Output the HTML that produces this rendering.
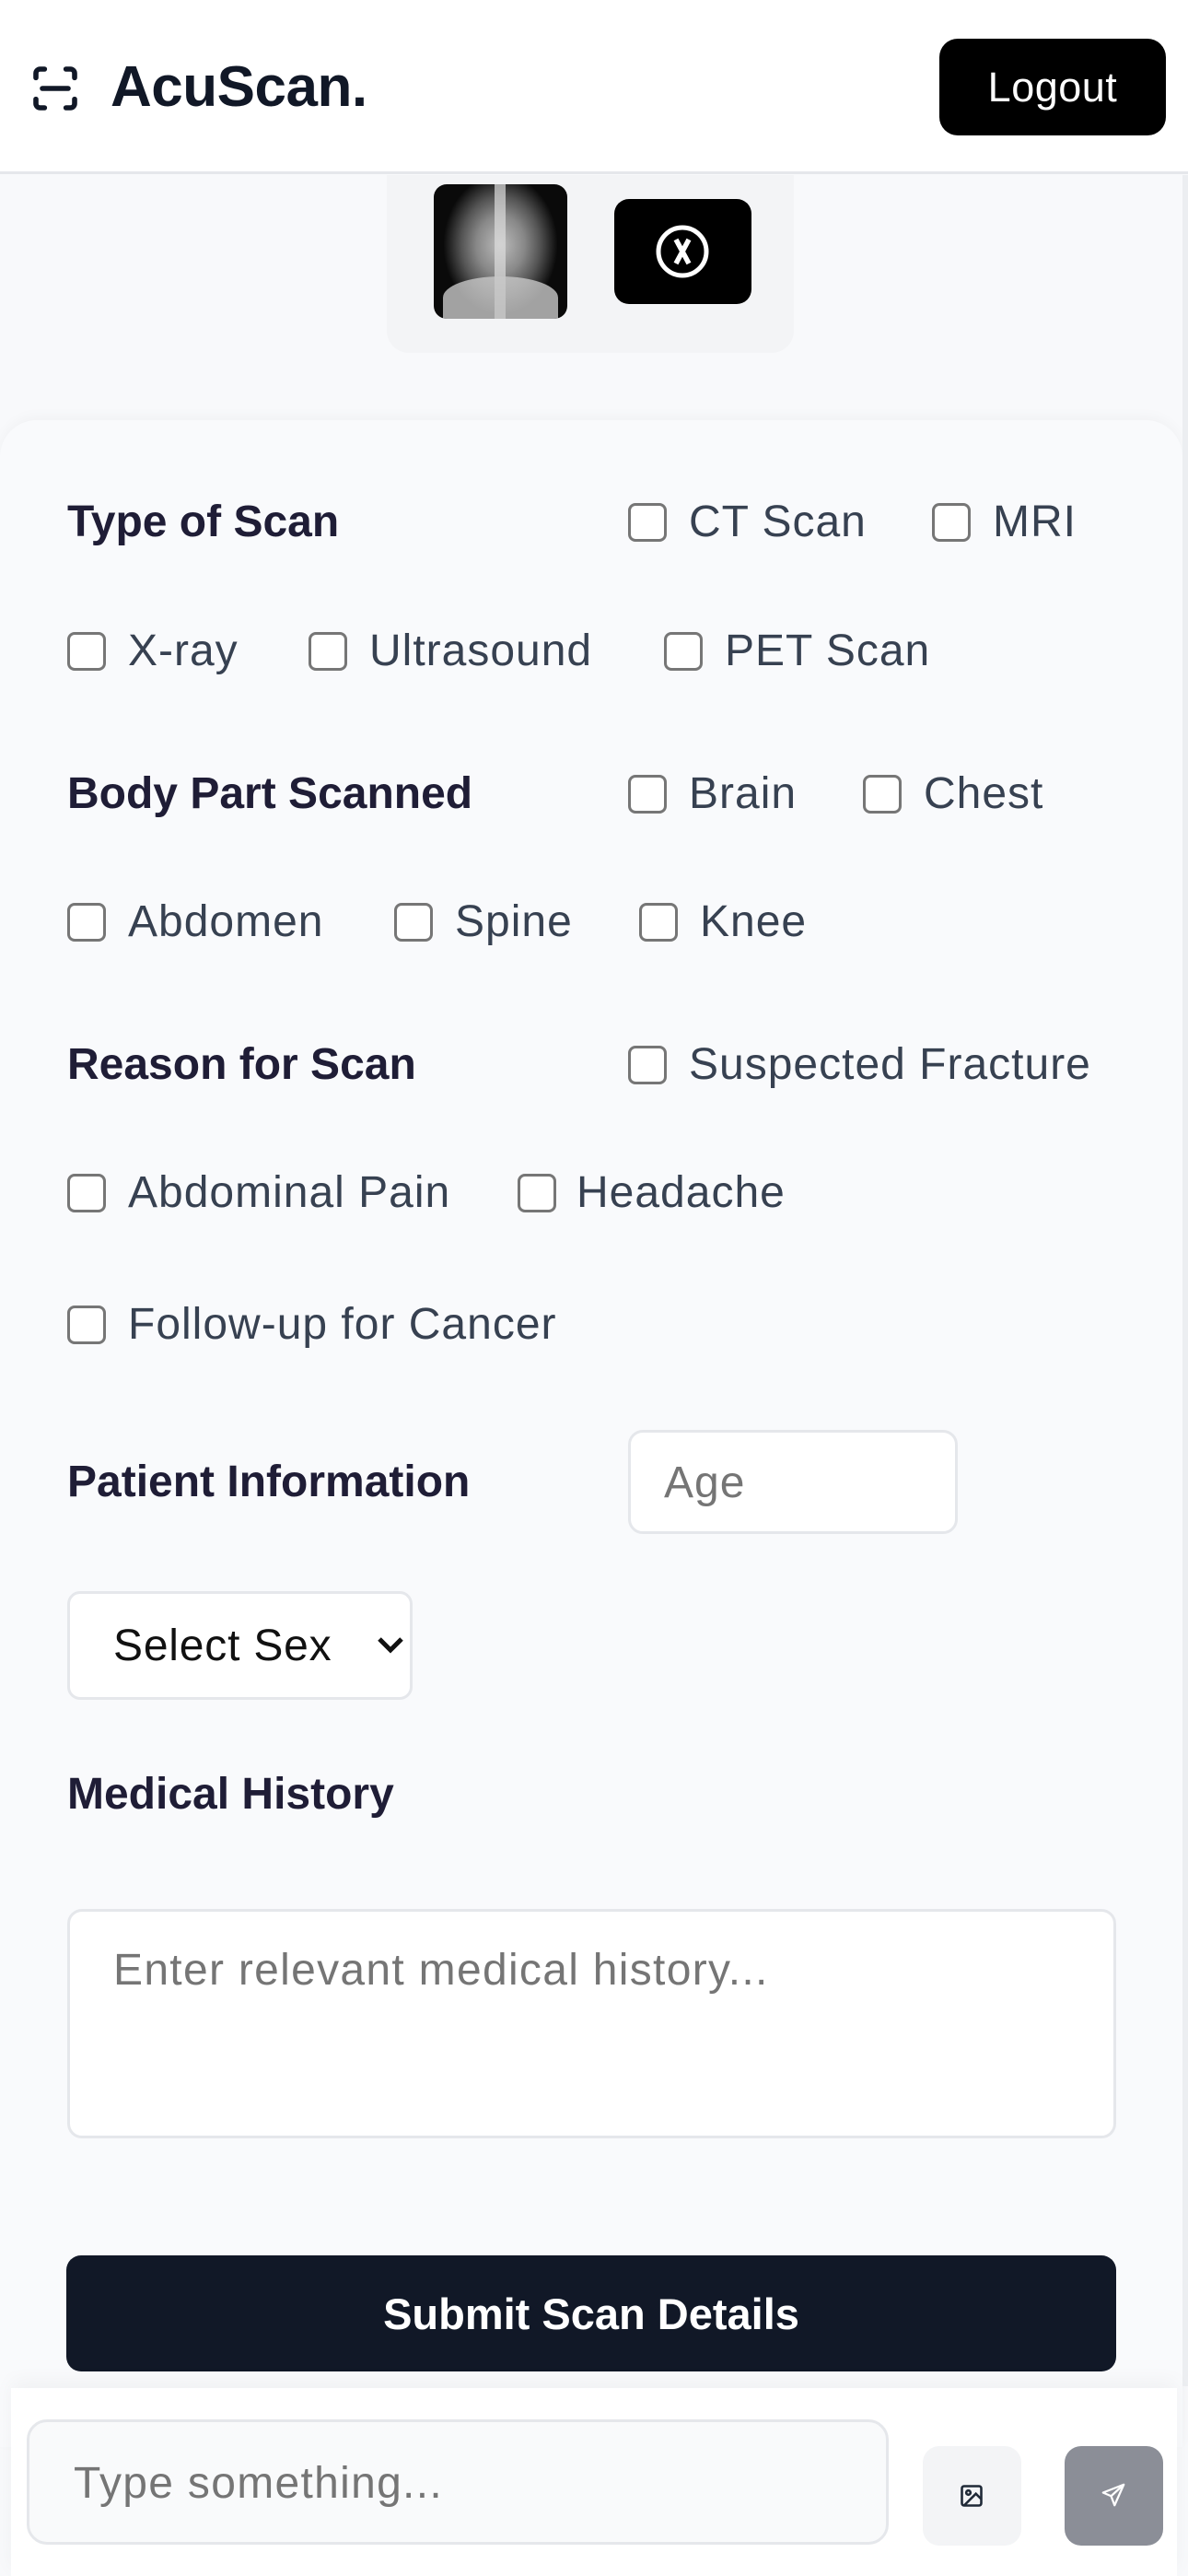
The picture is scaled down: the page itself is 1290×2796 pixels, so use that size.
<!DOCTYPE html>
<html><head><meta charset="utf-8">
<style>
*{box-sizing:border-box;margin:0;padding:0}
html,body{width:1290px;height:2796px;overflow:hidden;background:#f8f9fb;font-family:"Liberation Sans",sans-serif;position:relative}
.a{position:absolute;white-space:nowrap;line-height:1}
.h{font-size:48px;font-weight:bold;color:#1f1d36}
.l{font-size:48px;color:#374151;letter-spacing:1px}
.cb{position:absolute;width:42px;height:42px;border:3px solid #767676;border-radius:8px;background:#fff}
</style></head><body>
<!-- header -->
<div class="a" style="left:0;top:0;width:1290px;height:189px;background:#fff;border-bottom:3px solid #e5e7eb"></div>
<svg class="a" style="left:32px;top:68px" width="56" height="56" viewBox="0 0 24 24" fill="none" stroke="#111827" stroke-width="2.4" stroke-linecap="round">
<path d="M3 7V5a2 2 0 0 1 2-2h2M17 3h2a2 2 0 0 1 2 2v2M21 17v2a2 2 0 0 1-2 2h-2M7 21H5a2 2 0 0 1-2-2v-2M6 12h12"/></svg>
<div class="a" style="left:120px;top:64px;font-size:62px;font-weight:bold;color:#111827;letter-spacing:-0.5px">AcuScan.</div>
<div class="a" style="left:1020px;top:42px;width:246px;height:105px;background:#000;border-radius:20px;color:#fff;font-size:45px;letter-spacing:.5px;display:flex;align-items:center;justify-content:center">Logout</div>
<!-- image card -->
<div class="a" style="left:420px;top:190px;width:442px;height:193px;background:#f3f4f6;border-radius:0 0 24px 24px"></div>
<div class="a" style="left:471px;top:200px;width:145px;height:146px;border-radius:14px;background:radial-gradient(ellipse 45% 55% at 50% 45%,#bbb 0%,#888 40%,#555 65%,#0a0a0a 95%);overflow:hidden">
<div style="position:absolute;left:66px;top:0;width:12px;height:146px;background:#ddd;opacity:.7"></div>
<div style="position:absolute;left:10px;top:100px;width:125px;height:46px;background:#c8c8c8;border-radius:50% 50% 0 0;opacity:.8"></div>
</div>
<div class="a" style="left:667px;top:216px;width:149px;height:114px;background:#000;border-radius:16px"></div>
<svg class="a" style="left:711px;top:243px" width="60" height="60" viewBox="0 0 60 60" fill="none" stroke="#fff" stroke-width="5"><circle cx="30" cy="30" r="26"/><path d="M23 17l14 26M37 17L23 43" stroke-width="5.5"/></svg>
<!-- card -->
<div class="a" style="left:0;top:456px;width:1284px;height:2200px;background:#f9fafc;border-radius:40px 40px 0 0;box-shadow:0 -4px 14px rgba(0,0,0,.03)"></div>
<div class="a" style="left:1284px;top:190px;width:6px;height:2400px;background:#eceef1"></div>

<div class="a h" style="left:73px;top:543px">Type of Scan</div>
<div class="cb" style="left:682px;top:546px"></div><div class="a l" style="left:748px;top:543px">CT Scan</div>
<div class="cb" style="left:1012px;top:546px"></div><div class="a l" style="left:1078px;top:543px">MRI</div>
<div class="cb" style="left:73px;top:686px"></div><div class="a l" style="left:139px;top:683px">X-ray</div>
<div class="cb" style="left:335px;top:686px"></div><div class="a l" style="left:401px;top:683px">Ultrasound</div>
<div class="cb" style="left:721px;top:686px"></div><div class="a l" style="left:787px;top:683px">PET Scan</div>

<div class="a h" style="left:73px;top:838px">Body Part Scanned</div>
<div class="cb" style="left:682px;top:841px"></div><div class="a l" style="left:748px;top:838px">Brain</div>
<div class="cb" style="left:937px;top:841px"></div><div class="a l" style="left:1003px;top:838px">Chest</div>
<div class="cb" style="left:73px;top:980px"></div><div class="a l" style="left:139px;top:977px">Abdomen</div>
<div class="cb" style="left:428px;top:980px"></div><div class="a l" style="left:494px;top:977px">Spine</div>
<div class="cb" style="left:694px;top:980px"></div><div class="a l" style="left:760px;top:977px">Knee</div>

<div class="a h" style="left:73px;top:1132px">Reason for Scan</div>
<div class="cb" style="left:682px;top:1135px"></div><div class="a l" style="left:748px;top:1132px">Suspected Fracture</div>
<div class="cb" style="left:73px;top:1274px"></div><div class="a l" style="left:139px;top:1271px">Abdominal Pain</div>
<div class="cb" style="left:562px;top:1274px"></div><div class="a l" style="left:626px;top:1271px">Headache</div>
<div class="cb" style="left:73px;top:1417px"></div><div class="a l" style="left:139px;top:1414px">Follow-up for Cancer</div>

<div class="a h" style="left:73px;top:1585px">Patient Information</div>
<div class="a" style="left:682px;top:1552px;width:358px;height:113px;background:#fff;border:3px solid #e5e7eb;border-radius:16px"></div>
<div class="a" style="left:721px;top:1586px;font-size:48px;letter-spacing:1px;color:#757575">Age</div>
<div class="a" style="left:73px;top:1727px;width:375px;height:118px;background:#fff;border:3px solid #e5e7eb;border-radius:14px"></div>
<div class="a" style="left:123px;top:1763px;font-size:48px;letter-spacing:.8px;color:#111">Select Sex</div>
<svg class="a" style="left:408px;top:1774px" width="32" height="24" viewBox="0 0 32 24" fill="none" stroke="#111" stroke-width="5"><path d="M4 5l12 12L28 5"/></svg>

<div class="a h" style="left:73px;top:1924px">Medical History</div>
<div class="a" style="left:73px;top:2072px;width:1139px;height:249px;background:#fff;border:3px solid #e5e7eb;border-radius:16px"></div>
<div class="a" style="left:123px;top:2115px;font-size:48px;letter-spacing:1.3px;color:#757575">Enter relevant medical history...</div>

<div class="a" style="left:72px;top:2448px;width:1140px;height:126px;background:#111827;border-radius:16px;color:#fff;font-size:47px;font-weight:bold;display:flex;align-items:center;justify-content:center">Submit Scan Details</div>

<!-- bottom bar -->
<div class="a" style="left:12px;top:2592px;width:1266px;height:204px;background:#fff;box-shadow:0 -8px 20px rgba(0,0,0,.04)"></div>
<div class="a" style="left:29px;top:2626px;width:936px;height:136px;background:#f9fafb;border:3px solid #e5e7eb;border-radius:22px"></div>
<div class="a" style="left:80px;top:2672px;font-size:48px;letter-spacing:1.3px;color:#757575">Type something...</div>
<div class="a" style="left:1002px;top:2655px;width:107px;height:108px;background:#f3f4f6;border-radius:18px"></div>
<svg class="a" style="left:1041px;top:2695px" width="28" height="28" viewBox="0 0 24 24" fill="none" stroke="#1f2937" stroke-width="2.2"><rect x="3" y="3" width="18" height="18" rx="2"/><circle cx="9" cy="9" r="2"/><path d="M21 15l-5-5L5 21"/></svg>
<div class="a" style="left:1156px;top:2655px;width:107px;height:108px;background:#8b8e97;border-radius:18px"></div>
<svg class="a" style="left:1194px;top:2693px" width="30" height="30" viewBox="0 0 24 24" fill="none" stroke="#fff" stroke-width="1.8" stroke-linejoin="round"><path d="M21 3L3 10l7 3 3 8z"/><path d="M10 13l11-10"/></svg>
</body></html>
